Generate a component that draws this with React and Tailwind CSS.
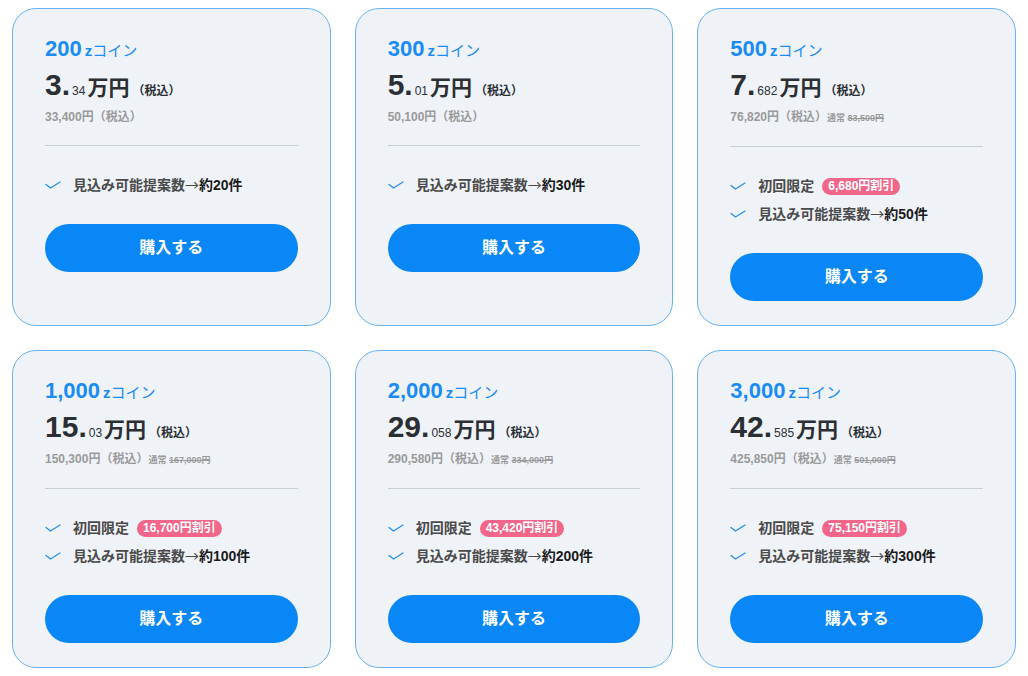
import React from 'react';

const plans = [
  { coins: '200', big: '3', small: '34', yen: '33,400', normal: null, discount: null, count: '20' },
  { coins: '300', big: '5', small: '01', yen: '50,100', normal: null, discount: null, count: '30' },
  { coins: '500', big: '7', small: '682', yen: '76,820', normal: '83,500', discount: '6,680', count: '50' },
  { coins: '1,000', big: '15', small: '03', yen: '150,300', normal: '167,000', discount: '16,700', count: '100' },
  { coins: '2,000', big: '29', small: '058', yen: '290,580', normal: '334,000', discount: '43,420', count: '200' },
  { coins: '3,000', big: '42', small: '585', yen: '425,850', normal: '501,000', discount: '75,150', count: '300' },
];

const Check = () => (
  <svg width="16" height="10" viewBox="0 0 16 10" className="shrink-0">
    <polyline points="1,4.5 5.5,8 15,2" fill="none" stroke="#2a93f0" strokeWidth="1.4" strokeLinecap="round" strokeLinejoin="round" />
  </svg>
);

const PlanCard = ({ plan }) => {
  return (
    <div className="rounded-[24px] border border-[#68b2f4] bg-[#eff3f8] bg-[radial-gradient(#e8edf3_0.7px,transparent_0.7px)] bg-[size:4px_4px] px-[32px] pt-[24px] pb-[24px]">
      {/* Coins */}
      <div className="flex items-baseline text-[#1a8cf5] leading-[32px]">
        <span className="text-[22px] font-bold">{plan.coins}</span>
        <span className="ml-[3px] text-[15px] font-bold">z</span>
        <span className="text-[15px]">コイン</span>
      </div>

      {/* Price */}
      <div className="mt-[1px] flex items-baseline text-[#2b2f33] leading-[34px]">
        <span className="text-[30px] font-bold">{plan.big}.</span>
        <span className="ml-[2px] text-[12px]">{plan.small}</span>
        <span className="ml-[2px] text-[21px] font-bold">万円</span>
        <span className="ml-[3px] text-[12px] font-bold">（税込）</span>
      </div>

      {/* Tax-included yen */}
      <div className="flex items-baseline leading-[18px] text-[#9a9a9a]">
        <span className="text-[12px] font-bold">{plan.yen}円（税込）</span>
        {plan.normal && (
          <span className="text-[9px] font-bold">
            通常 <span className="line-through">{plan.normal}円</span>
          </span>
        )}
      </div>

      <div className="mt-[19px] border-t border-[#c9ced4]" />

      {/* Features */}
      <ul className="mt-[29px] flex flex-col gap-[8px]">
        {plan.discount && (
          <li className="flex items-center h-[20px] text-[14px] font-bold text-[#4a4a4a]">
            <Check />
            <span className="ml-[12px]">初回限定</span>
            <span className="ml-[8px] rounded-full bg-[#f2668a] px-[6px] text-[12px] leading-[17px] text-white">{plan.discount}円割引</span>
          </li>
        )}
        <li className="flex items-center h-[20px] text-[14px] font-bold text-[#4a4a4a]">
          <Check />
          <span className="ml-[12px]">
            見込み可能提案数<span className="font-normal" style={{ fontFamily: '"Noto Sans CJK JP", sans-serif' }}>→</span>
            <span className="text-[#1a1a1a]">約{plan.count}件</span>
          </span>
        </li>
      </ul>

      <button className="mt-[29px] flex h-[48px] w-full items-center justify-center rounded-full bg-[#0a87f6] text-[16px] font-bold text-white">
        購入する
      </button>
    </div>
  );
};

export default function App() {
  return (
    <div className="min-h-[676px] bg-white px-[12px] py-[8px]" style={{ fontFamily: '"Liberation Sans", "Noto Sans CJK JP", sans-serif' }}>
      <div className="grid grid-cols-3 gap-x-[24px] gap-y-[24px]">
        {plans.map((p) => (
          <PlanCard key={p.coins} plan={p} />
        ))}
      </div>
    </div>
  );
}
